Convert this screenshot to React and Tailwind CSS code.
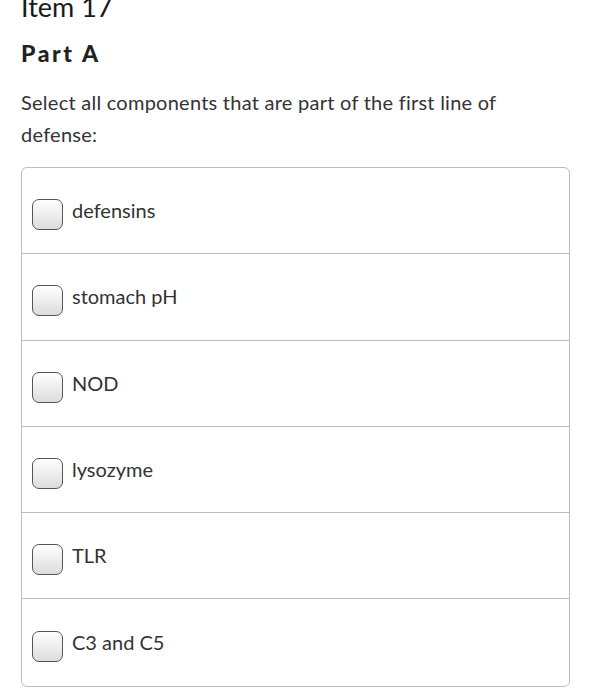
import React from "react";

const options = ["defensins", "stomach pH", "NOD", "lysozyme", "TLR", "C3 and C5"];

const App = () => {
  return (
    <div className="min-h-screen bg-white px-[21px] text-[#333] font-['Lato','Open_Sans',sans-serif] overflow-hidden">
      {/* Header, cropped at the top like the reference */}
      <h1 className="text-[27px] leading-none text-[#1a1a1a] -mt-[7px]">Item 17</h1>
      <h2 className="mt-[22px] text-[23px] font-black tracking-[2.6px] leading-none text-[#222]">Part A</h2>

      <p className="mt-[21px] text-[20px] tracking-[0.25px] leading-[32px] text-[#333]">
        Select all components that are part of the first line of
        <br />
        defense:
      </p>

      <div className="mt-[17px] w-[549px] border border-[#bdbdbd] rounded-[6px] divide-y divide-[#bdbdbd]">
        {options.map((opt) => (
          <label key={opt} className="flex items-center h-[86.3px] pl-[10px] pt-[8px] cursor-pointer">
            <span className="w-[31px] h-[31px] rounded-[7px] border-[1.5px] border-[#555] bg-gradient-to-b from-white to-[#dcdcdc] shrink-0"></span>
            <span className="ml-[9px] text-[20px] text-[#333] -mt-[9px]">{opt}</span>
          </label>
        ))}
      </div>
    </div>
  );
};

export default App;
